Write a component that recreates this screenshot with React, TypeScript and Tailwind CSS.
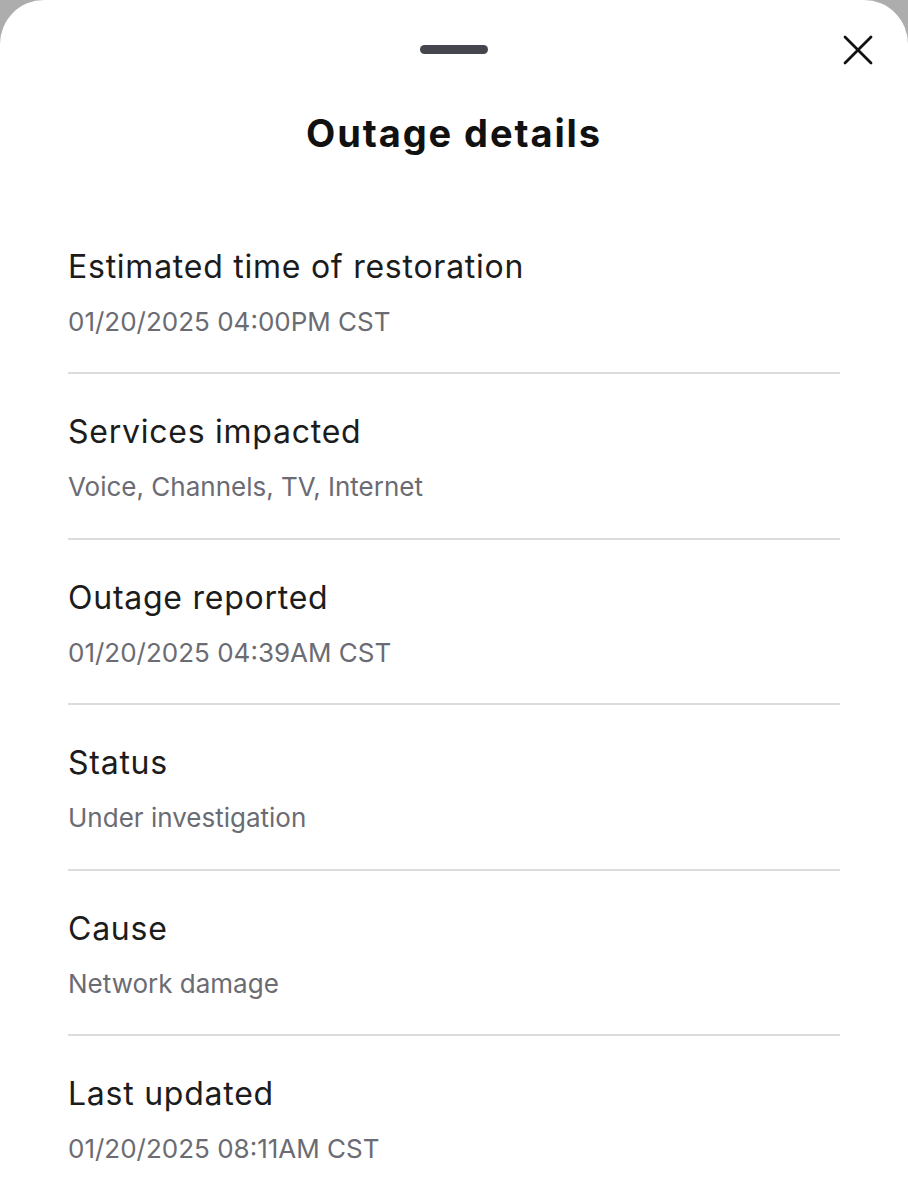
import React from "react";

const rows = [
  { label: "Estimated time of restoration", value: "01/20/2025 04:00PM CST" },
  { label: "Services impacted", value: "Voice, Channels, TV, Internet" },
  { label: "Outage reported", value: "01/20/2025 04:39AM CST" },
  { label: "Status", value: "Under investigation" },
  { label: "Cause", value: "Network damage" },
  { label: "Last updated", value: "01/20/2025 08:11AM CST" },
];

export default function App() {
  return (
    <div className="w-[908px] h-[1200px] bg-[#adadad] overflow-hidden" style={{ fontFamily: "Inter, 'Noto Sans', sans-serif" }}>
      <div className="relative h-full bg-white rounded-t-[44px] flex flex-col">
        <div className="flex justify-center pt-[45px]">
          <div className="w-[68px] h-[9px] rounded-full bg-[#45454d]" />
        </div>
        <button className="absolute right-[35px] top-[35px] w-[30px] h-[30px] flex items-center justify-center">
          <svg width="30" height="30" viewBox="0 0 30 30" fill="none" stroke="#111" strokeWidth="2.8" strokeLinecap="round">
            <path d="M2 2 L28 28" />
            <path d="M28 2 L2 28" />
          </svg>
        </button>
        <h1 className="mt-[55px] text-center text-[38px] leading-[48px] font-bold tracking-[1.9px] text-[#111111]">Outage details</h1>
        <div className="mt-[51.5px] px-[68px] flex flex-col">
          {rows.map((r, i) => (
            <div key={r.label} className={`pt-[38px] pb-[33.5px] ${i < rows.length - 1 ? "border-b-2 border-[#dcdcdc]" : ""}`}>
              <div className="text-[32px] leading-[40px] tracking-[0.75px] text-[#1c1c1c]">{r.label}</div>
              <div className="mt-[18px] text-[26px] leading-[34px] text-[#6b6b73]">{r.value}</div>
            </div>
          ))}
        </div>
      </div>
    </div>
  );
}
